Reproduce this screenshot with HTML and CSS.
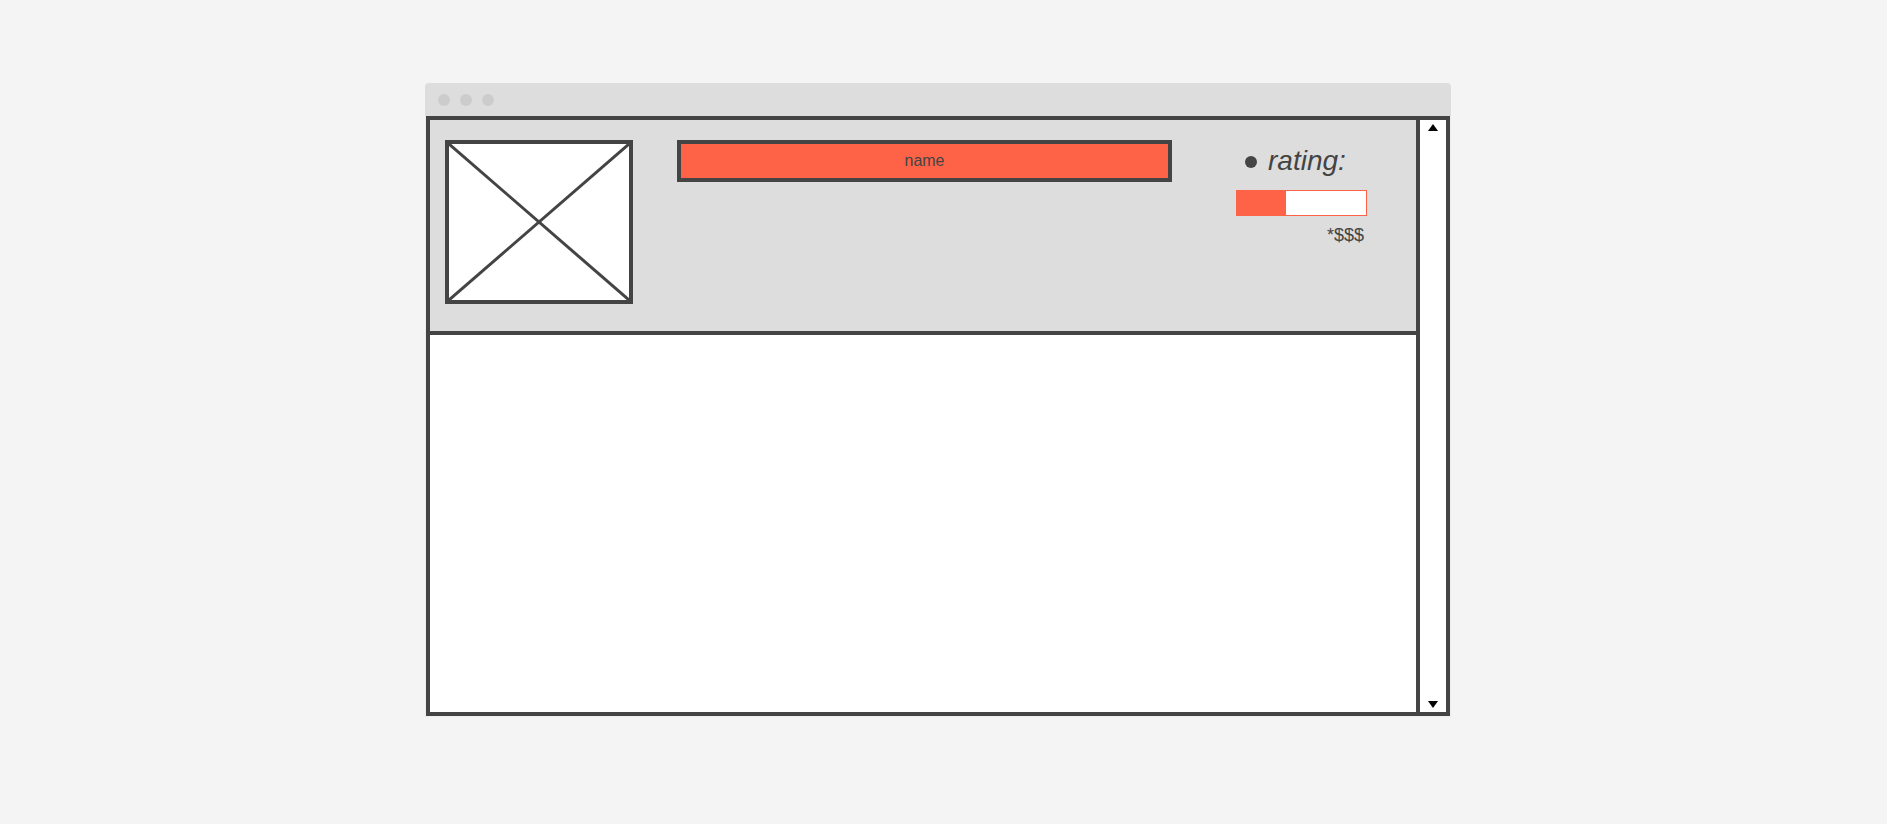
FILE: index.html
```html
<!DOCTYPE html>
<html lang="en">
<head>
  <meta charset="UTF-8" />
  <title>Wireframe</title>
  <link rel="stylesheet" href="styles.css">
</head>
<body>
  <div class="window">
    <div class="chrome">
      <span class="dot"></span>
      <span class="dot"></span>
      <span class="dot"></span>
    </div>
    <div class="frame">
      <div class="main">
        <div class="header">
          <div class="thumb">
            <svg width="180" height="156" viewBox="0 0 180 156">
              <line x1="0" y1="0" x2="180" y2="156" />
              <line x1="180" y1="0" x2="0" y2="156" />
            </svg>
          </div>
          <div class="name">name</div>
          <div class="rating">
            <div class="rating-row">
              <span class="bullet"></span>
              <span class="rating-label">rating:</span>
            </div>
            <div class="bar"><div class="bar-fill" style="width: 49px"></div></div>
            <div class="price">*$$$</div>
          </div>
        </div>
        <div class="content"></div>
      </div>
      <div class="scrollbar">
        <span class="arrow up"></span>
        <span class="arrow down"></span>
      </div>
    </div>
  </div>
</body>
</html>
```

FILE: styles.css
```css
body {
  margin: 0;
  background: #f4f4f4;
  font-family: "Liberation Sans", Arial, sans-serif;
  color: #444;
}

.window {
  width: 1026px;
  margin: 83px 0 0 425px;
  background: #ededed;
  border-radius: 4px 4px 0 0;
  padding-bottom: 1px;
}

.chrome {
  height: 33px;
  background: #dddddd;
  border-radius: 4px 4px 0 0;
  display: flex;
  align-items: center;
  gap: 10px;
  padding-left: 13px;
}

.dot {
  width: 12px;
  height: 12px;
  border-radius: 50%;
  background: #cccccc;
}

.frame {
  margin: 0 1px;
  height: 592px;
  border: 4px solid #444;
  display: flex;
  background: #fff;
}

.main {
  flex: 1;
  display: flex;
  flex-direction: column;
}

.header {
  height: 215px;
  box-sizing: border-box;
  background: #dddddd;
  border-bottom: 4px solid #444;
  display: flex;
  align-items: flex-start;
  padding: 20px 0 0 15px;
}

.thumb {
  width: 180px;
  height: 156px;
  border: 4px solid #444;
  background: #fff;
}

.thumb svg {
  display: block;
}

.thumb line {
  stroke: #444;
  stroke-width: 3;
}

.name {
  width: 487px;
  height: 34px;
  margin-left: 44px;
  border: 4px solid #444;
  background: #ff6347;
  font-size: 16px;
  line-height: 34px;
  text-align: center;
}

.rating {
  margin-left: 64px;
  width: 131px;
  display: flex;
  flex-direction: column;
}

.rating-row {
  height: 42px;
  display: flex;
  align-items: center;
  gap: 11px;
  padding-left: 9px;
}

.bullet {
  width: 12px;
  height: 12px;
  border-radius: 50%;
  background: #444;
  margin-top: 2px;
}

.rating-label {
  font-size: 28px;
  font-style: italic;
}

.bar {
  margin-top: 8px;
  height: 24px;
  border: 1px solid #ff6347;
  background: #fff;
}

.bar-fill {
  height: 100%;
  background: #ff6347;
}

.price {
  margin-top: 9px;
  font-size: 18px;
  line-height: 20px;
  text-align: right;
  padding-right: 3px;
}

.content {
  flex: 1;
  background: #fff;
}

.scrollbar {
  width: 26px;
  border-left: 4px solid #444;
  display: flex;
  flex-direction: column;
  justify-content: space-between;
  align-items: center;
  padding: 4px 0;
}

.arrow {
  width: 0;
  height: 0;
  border-left: 5px solid transparent;
  border-right: 5px solid transparent;
}

.arrow.up {
  border-bottom: 7px solid #000;
}

.arrow.down {
  border-top: 7px solid #000;
}
```
